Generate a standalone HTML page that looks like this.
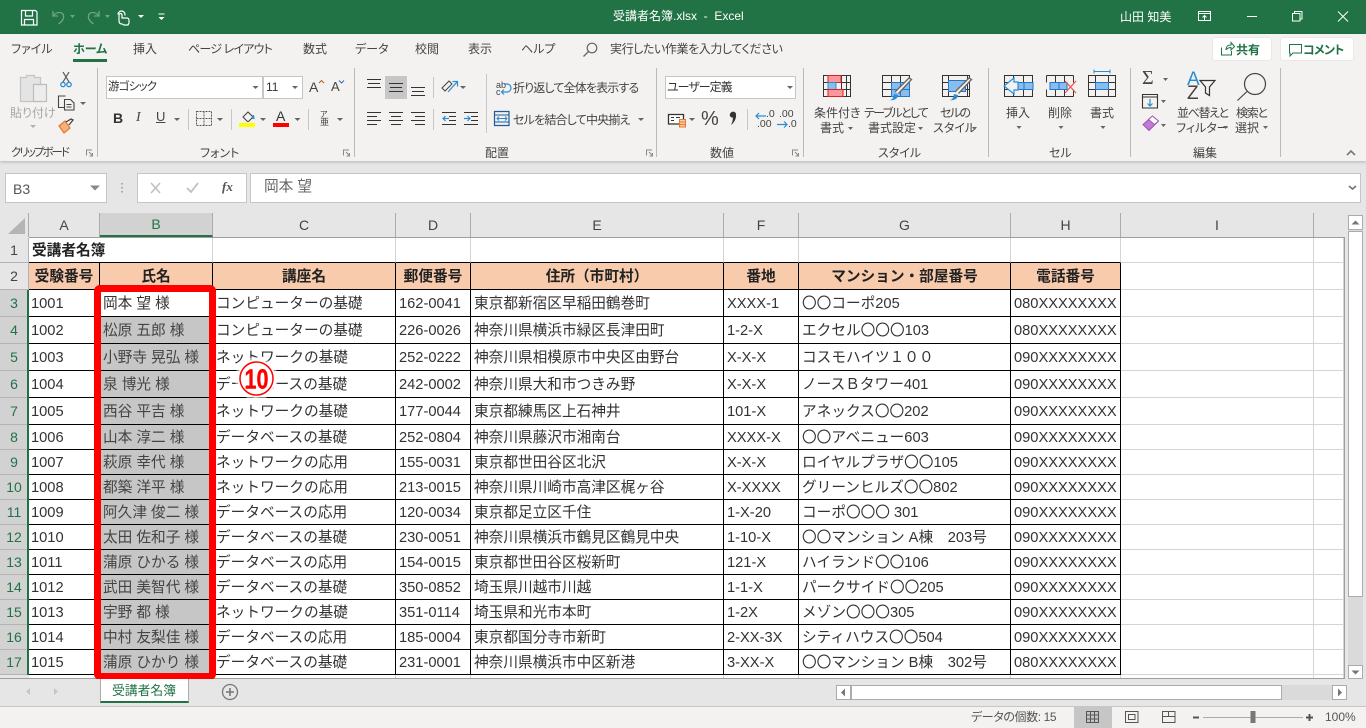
<!DOCTYPE html>
<html lang="ja">
<head>
<meta charset="utf-8">
<title>受講者名簿.xlsx - Excel</title>
<style>
html,body{margin:0;padding:0;width:1366px;height:728px;overflow:hidden;background:#e6e6e6;}
body{position:relative;font-family:"Liberation Sans","Noto Sans CJK JP",sans-serif;color:#000;}
.a{position:absolute;}
.t{position:absolute;white-space:nowrap;font-size:12px;line-height:18px;height:18px;color:#444;font-feature-settings:"palt";}
.c{transform:translateX(-50%);text-align:center;}
.g{color:#a6a6a6;}
.w{color:#fff;}
#sheet{position:absolute;left:29px;top:238px;width:1315px;height:440px;overflow:hidden;background:#fff;}
table{border-spacing:0;table-layout:fixed;border-collapse:separate;}
#sheet td{box-sizing:border-box;padding:2px 0 0 2px;font-size:14.67px;line-height:18px;white-space:nowrap;overflow:hidden;border-right:1px solid #d4d4d4;border-bottom:1px solid #d4d4d4;vertical-align:middle;color:#333;}
#sheet tr.d td.k{border-right:1px solid #000;border-bottom:1px solid #000;}
#sheet td.h{background:#f8cbad;font-weight:bold;text-align:center;padding:2px 0 0 0;border-right:1px solid #000;border-bottom:1px solid #000;color:#222;}
#sheet td.n{padding-left:3px;}
#sheet td.s{background:#c6c6c6;padding-left:3px;color:#444;}
#sheet td.x{padding-left:3px;}
.ch{position:absolute;top:213px;height:24px;line-height:24px;text-align:center;font-size:14px;color:#444;background:#e6e6e6;box-sizing:border-box;border-right:1px solid #ababab;}
.rh{position:absolute;left:0;width:28px;text-align:center;font-size:14px;color:#444;background:#e6e6e6;box-sizing:border-box;border-bottom:1px solid #b4b4b4;}
.rs{background:#d2d2d2;color:#217346;}
.box{position:absolute;background:#fff;border:1px solid #c6c6c6;box-sizing:border-box;}
</style>
</head>
<body>

<!-- title bar -->
<div class="a" style="left:0;top:0;width:1366px;height:34px;background:#217346;"></div>
<!-- ribbon -->
<div class="a" style="left:0;top:34px;width:1366px;height:127px;background:#f3f2f1;box-shadow:0 1px 3px rgba(0,0,0,.22);"></div>

<span class="t w" style="left:613px;top:7px;font-feature-settings:normal;">受講者名簿.xlsx&nbsp;&nbsp;-&nbsp;&nbsp;Excel</span>
<span class="t w" style="left:1120px;top:8px;font-feature-settings:normal;">山田 知美</span>

<!-- tabs -->
<span class="t" style="left:11px;top:40px;">ファイル</span>
<span class="t" style="left:73px;top:40px;font-weight:bold;color:#217346;">ホーム</span>
<div class="a" style="left:73px;top:59px;width:34px;height:3px;background:#217346;"></div>
<span class="t" style="left:133px;top:40px;">挿入</span>
<span class="t" style="left:188px;top:40px;letter-spacing:-.8px;">ページ レイアウト</span>
<span class="t" style="left:303px;top:40px;">数式</span>
<span class="t" style="left:355px;top:40px;">データ</span>
<span class="t" style="left:415px;top:40px;">校閲</span>
<span class="t" style="left:468px;top:40px;">表示</span>
<span class="t" style="left:521px;top:40px;">ヘルプ</span>
<span class="t" style="left:610px;top:40px;letter-spacing:-.4px;">実行したい作業を入力してください</span>

<div class="a" style="left:1213px;top:38px;width:58px;height:22px;background:#fff;border-radius:2px;box-shadow:0 0 1px #bbb;"></div>
<span class="t" style="left:1236px;top:41px;font-weight:bold;color:#217346;">共有</span>
<div class="a" style="left:1281px;top:38px;width:72px;height:22px;background:#fff;border-radius:2px;box-shadow:0 0 1px #bbb;"></div>
<span class="t" style="left:1303px;top:41px;font-weight:bold;color:#217346;letter-spacing:-.7px;">コメント</span>

<!-- clipboard labels -->
<span class="t g" style="left:10px;top:104px;">貼り付け</span>
<span class="t" style="left:11px;top:144px;font-size:11.5px;letter-spacing:-2px;">クリップボード</span>
<span class="t" style="left:200px;top:144px;">フォント</span>
<span class="t" style="left:485px;top:144px;">配置</span>
<span class="t" style="left:710px;top:144px;">数値</span>
<span class="t" style="left:878px;top:144px;">スタイル</span>
<span class="t" style="left:1049px;top:144px;">セル</span>
<span class="t" style="left:1193px;top:144px;">編集</span>

<!-- font boxes -->
<div class="box" style="left:106px;top:76px;width:157px;height:23px;"></div>
<div class="box" style="left:263px;top:76px;width:40px;height:23px;"></div>
<span class="t" style="left:108px;top:78px;font-size:11.5px;color:#333;letter-spacing:-.8px;">游ゴシック</span>
<span class="t" style="left:266px;top:78px;color:#333;">11</span>
<span class="t" style="left:309px;top:78px;font-size:14px;">A</span>
<span class="t" style="left:331px;top:78px;font-size:13px;">A</span>
<span class="t" style="left:113px;top:109px;font-weight:bold;font-size:14px;color:#333;">B</span>
<span class="t" style="left:136px;top:109px;font-style:italic;font-family:'Liberation Serif',serif;font-size:14px;">I</span>
<span class="t" style="left:156px;top:108px;font-size:13px;text-decoration:underline;">U</span>
<span class="t" style="left:276px;top:107px;font-size:14px;color:#333;">A</span>
<span class="t" style="left:320px;top:106px;font-size:8px;">ア</span>
<span class="t" style="left:320px;top:113px;font-size:9px;">亜</span>

<!-- align labels -->
<span class="t" style="left:513px;top:79px;letter-spacing:-.85px;">折り返して全体を表示する</span>
<span class="t" style="left:513px;top:111px;letter-spacing:-.8px;">セルを結合して中央揃え</span>
<span class="t" style="left:496px;top:76px;font-size:9px;color:#444;">ab</span>
<span class="t" style="left:496px;top:83px;font-size:9px;color:#444;">c</span>

<!-- number -->
<div class="box" style="left:665px;top:76px;width:131px;height:23px;"></div>
<span class="t" style="left:667px;top:78px;color:#333;letter-spacing:-1px;">ユーザー定義</span>
<span class="t" style="left:701px;top:110px;font-size:20px;">%</span>
<span class="t" style="left:766px;top:105px;font-size:10.5px;">.0</span>
<span class="t" style="left:757px;top:115px;font-size:10.5px;">.00</span>
<span class="t" style="left:779px;top:105px;font-size:10.5px;">.00</span>
<span class="t" style="left:788px;top:115px;font-size:10.5px;">.0</span>

<!-- style labels -->
<span class="t" style="left:814px;top:104px;">条件付き</span>
<span class="t" style="left:820px;top:119px;">書式</span>
<span class="t" style="left:864px;top:104px;letter-spacing:-1.7px;">テーブルとして</span>
<span class="t" style="left:868px;top:119px;">書式設定</span>
<span class="t" style="left:940px;top:104px;letter-spacing:-1.6px;">セルの</span>
<span class="t" style="left:933px;top:119px;">スタイル</span>
<span class="t" style="left:1006px;top:104px;">挿入</span>
<span class="t" style="left:1048px;top:104px;">削除</span>
<span class="t" style="left:1090px;top:104px;">書式</span>
<span class="t" style="left:1177px;top:104px;letter-spacing:-1.4px;">並べ替えと</span>
<span class="t" style="left:1176px;top:119px;">フィルター</span>
<span class="t" style="left:1236px;top:104px;letter-spacing:-1.3px;">検索と</span>
<span class="t" style="left:1235px;top:119px;">選択</span>
<span class="t" style="left:1142px;top:69px;font-size:20px;font-family:'Liberation Serif',serif;">Σ</span>
<span class="t" style="left:1187px;top:71px;font-size:19px;color:#2a8dd4;">A</span>
<span class="t" style="left:1187px;top:85px;font-size:19px;">Z</span>

<!-- formula bar -->
<div class="box" style="left:5px;top:173px;width:102px;height:30px;"></div>
<span class="t" style="left:13px;top:180px;font-size:14px;color:#555;font-feature-settings:normal;">B3</span>
<div class="box" style="left:137px;top:173px;width:110px;height:30px;"></div>
<div class="box" style="left:250px;top:173px;width:1111px;height:30px;"></div>
<span class="t" style="left:264px;top:178px;font-size:14.67px;color:#666;font-feature-settings:normal;">岡本 望</span>
<span class="t" style="left:222px;top:178px;font-family:'Liberation Serif',serif;font-style:italic;font-weight:bold;font-size:13px;color:#555;">fx</span>

<!-- column headers -->
<div class="ch" style="left:0;width:29px;"></div>
<div class="ch" style="left:29px;width:71px;">A</div>
<div class="ch" style="left:100px;width:113px;background:#d2d2d2;color:#217346;border-bottom:2px solid #217346;line-height:22px;">B</div>
<div class="ch" style="left:213px;width:183px;">C</div>
<div class="ch" style="left:396px;width:75px;">D</div>
<div class="ch" style="left:471px;width:253px;">E</div>
<div class="ch" style="left:724px;width:75px;">F</div>
<div class="ch" style="left:799px;width:212px;">G</div>
<div class="ch" style="left:1011px;width:110px;">H</div>
<div class="ch" style="left:1121px;width:193px;">I</div>
<div class="ch" style="left:1314px;width:30px;border-right:none;"></div>
<div class="a" style="left:29px;top:237px;width:1316px;height:1px;background:#9e9e9e;"></div>
<div class="a" style="left:1344px;top:237px;width:1px;height:442px;background:#9e9e9e;"></div>
<div class="a" style="left:0;top:678px;width:1345px;height:1px;background:#9e9e9e;"></div>

<!-- row headers -->
<div class="rh" style="top:238px;height:25px;line-height:25px;">1</div>
<div class="rh" style="top:263px;height:27px;line-height:27px;">2</div>
<div class="rh rs" style="top:290px;height:27px;line-height:27px;">3</div>
<div class="rh rs" style="top:317px;height:27px;line-height:27px;">4</div>
<div class="rh rs" style="top:344px;height:27px;line-height:27px;">5</div>
<div class="rh rs" style="top:371px;height:27px;line-height:27px;">6</div>
<div class="rh rs" style="top:398px;height:27px;line-height:27px;">7</div>
<div class="rh rs" style="top:425px;height:25px;line-height:25px;">8</div>
<div class="rh rs" style="top:450px;height:25px;line-height:25px;">9</div>
<div class="rh rs" style="top:475px;height:25px;line-height:25px;">10</div>
<div class="rh rs" style="top:500px;height:25px;line-height:25px;">11</div>
<div class="rh rs" style="top:525px;height:25px;line-height:25px;">12</div>
<div class="rh rs" style="top:550px;height:25px;line-height:25px;">13</div>
<div class="rh rs" style="top:575px;height:25px;line-height:25px;">14</div>
<div class="rh rs" style="top:600px;height:25px;line-height:25px;">15</div>
<div class="rh rs" style="top:625px;height:25px;line-height:25px;">16</div>
<div class="rh rs" style="top:650px;height:25px;line-height:25px;">17</div>
<div class="rh" style="top:675px;height:3px;border:none;"></div>
<div class="a" style="left:28px;top:238px;width:1px;height:52px;background:#b4b4b4;"></div>
<div class="a" style="left:27px;top:290px;width:2px;height:385px;background:#217346;"></div>

<!-- sheet -->
<div id="sheet">
<table style="width:1315px;">
<colgroup><col style="width:71px"><col style="width:113px"><col style="width:183px"><col style="width:75px"><col style="width:253px"><col style="width:75px"><col style="width:212px"><col style="width:110px"><col style="width:193px"><col style="width:30px"></colgroup>
<tr style="height:25px"><td style="font-weight:bold;border-right:none;border-bottom:1px solid #000;overflow:visible;padding-left:3px;color:#222;">受講者名簿</td><td style="border-bottom:1px solid #000"></td><td style="border-bottom:1px solid #000"></td><td style="border-bottom:1px solid #000"></td><td style="border-bottom:1px solid #000"></td><td style="border-bottom:1px solid #000"></td><td style="border-bottom:1px solid #000"></td><td style="border-bottom:1px solid #000"></td><td></td><td></td></tr>
<tr style="height:27px"><td class="h">受験番号</td><td class="h">氏名</td><td class="h">講座名</td><td class="h">郵便番号</td><td class="h">住所（市町村）</td><td class="h">番地</td><td class="h">マンション・部屋番号</td><td class="h">電話番号</td><td></td><td></td></tr>
<tr class="d" style="height:27px"><td class="k">1001</td><td class="k n">岡本 望 様</td><td class="k x">コンピューターの基礎</td><td class="k x">162-0041</td><td class="k x">東京都新宿区早稲田鶴巻町</td><td class="k x">XXXX-1</td><td class="k x">〇〇コーポ205</td><td class="k x">080XXXXXXXX</td><td></td><td></td></tr>
<tr class="d" style="height:27px"><td class="k">1002</td><td class="k s">松原 五郎 様</td><td class="k x">コンピューターの基礎</td><td class="k x">226-0026</td><td class="k x">神奈川県横浜市緑区長津田町</td><td class="k x">1-2-X</td><td class="k x">エクセル〇〇〇103</td><td class="k x">080XXXXXXXX</td><td></td><td></td></tr>
<tr class="d" style="height:27px"><td class="k">1003</td><td class="k s">小野寺 晃弘 様</td><td class="k x">ネットワークの基礎</td><td class="k x">252-0222</td><td class="k x">神奈川県相模原市中央区由野台</td><td class="k x">X-X-X</td><td class="k x">コスモハイツ１００</td><td class="k x">090XXXXXXXX</td><td></td><td></td></tr>
<tr class="d" style="height:27px"><td class="k">1004</td><td class="k s">泉 博光 様</td><td class="k x">データベースの基礎</td><td class="k x">242-0002</td><td class="k x">神奈川県大和市つきみ野</td><td class="k x">X-X-X</td><td class="k x">ノースＢタワー401</td><td class="k x">090XXXXXXXX</td><td></td><td></td></tr>
<tr class="d" style="height:27px"><td class="k">1005</td><td class="k s">西谷 平吉 様</td><td class="k x">ネットワークの基礎</td><td class="k x">177-0044</td><td class="k x">東京都練馬区上石神井</td><td class="k x">101-X</td><td class="k x">アネックス〇〇202</td><td class="k x">090XXXXXXXX</td><td></td><td></td></tr>
<tr class="d" style="height:25px"><td class="k">1006</td><td class="k s">山本 淳二 様</td><td class="k x">データベースの基礎</td><td class="k x">252-0804</td><td class="k x">神奈川県藤沢市湘南台</td><td class="k x">XXXX-X</td><td class="k x">〇〇アベニュー603</td><td class="k x">090XXXXXXXX</td><td></td><td></td></tr>
<tr class="d" style="height:25px"><td class="k">1007</td><td class="k s">萩原 幸代 様</td><td class="k x">ネットワークの応用</td><td class="k x">155-0031</td><td class="k x">東京都世田谷区北沢</td><td class="k x">X-X-X</td><td class="k x">ロイヤルプラザ〇〇105</td><td class="k x">090XXXXXXXX</td><td></td><td></td></tr>
<tr class="d" style="height:25px"><td class="k">1008</td><td class="k s">都築 洋平 様</td><td class="k x">ネットワークの応用</td><td class="k x">213-0015</td><td class="k x">神奈川県川崎市高津区梶ヶ谷</td><td class="k x">X-XXXX</td><td class="k x">グリーンヒルズ〇〇802</td><td class="k x">090XXXXXXXX</td><td></td><td></td></tr>
<tr class="d" style="height:25px"><td class="k">1009</td><td class="k s">阿久津 俊二 様</td><td class="k x">データベースの応用</td><td class="k x">120-0034</td><td class="k x">東京都足立区千住</td><td class="k x">1-X-20</td><td class="k x">コーポ〇〇〇 301</td><td class="k x">090XXXXXXXX</td><td></td><td></td></tr>
<tr class="d" style="height:25px"><td class="k">1010</td><td class="k s">太田 佐和子 様</td><td class="k x">データベースの基礎</td><td class="k x">230-0051</td><td class="k x">神奈川県横浜市鶴見区鶴見中央</td><td class="k x">1-10-X</td><td class="k x">〇〇マンション A棟　203号</td><td class="k x">090XXXXXXXX</td><td></td><td></td></tr>
<tr class="d" style="height:25px"><td class="k">1011</td><td class="k s">蒲原 ひかる 様</td><td class="k x">データベースの応用</td><td class="k x">154-0015</td><td class="k x">東京都世田谷区桜新町</td><td class="k x">121-X</td><td class="k x">ハイランド〇〇106</td><td class="k x">090XXXXXXXX</td><td></td><td></td></tr>
<tr class="d" style="height:25px"><td class="k">1012</td><td class="k s">武田 美智代 様</td><td class="k x">データベースの基礎</td><td class="k x">350-0852</td><td class="k x">埼玉県川越市川越</td><td class="k x">1-1-X</td><td class="k x">パークサイド〇〇205</td><td class="k x">090XXXXXXXX</td><td></td><td></td></tr>
<tr class="d" style="height:25px"><td class="k">1013</td><td class="k s">宇野 都 様</td><td class="k x">ネットワークの基礎</td><td class="k x">351-0114</td><td class="k x">埼玉県和光市本町</td><td class="k x">1-2X</td><td class="k x">メゾン〇〇〇305</td><td class="k x">090XXXXXXXX</td><td></td><td></td></tr>
<tr class="d" style="height:25px"><td class="k">1014</td><td class="k s">中村 友梨佳 様</td><td class="k x">データベースの応用</td><td class="k x">185-0004</td><td class="k x">東京都国分寺市新町</td><td class="k x">2-XX-3X</td><td class="k x">シティハウス〇〇504</td><td class="k x">090XXXXXXXX</td><td></td><td></td></tr>
<tr class="d" style="height:25px"><td class="k">1015</td><td class="k s">蒲原 ひかり 様</td><td class="k x">データベースの基礎</td><td class="k x">231-0001</td><td class="k x">神奈川県横浜市中区新港</td><td class="k x">3-XX-X</td><td class="k x">〇〇マンション B棟　302号</td><td class="k x">080XXXXXXXX</td><td></td><td></td></tr>
<tr style="height:25px"><td></td><td></td><td></td><td></td><td></td><td></td><td></td><td></td><td></td><td></td></tr>
</table>
</div>

<!-- red selection box -->
<div class="a" style="left:94px;top:285px;width:122px;height:395px;box-sizing:border-box;border:7px solid #f00;border-radius:6px;"></div>

<!-- scrollbars bg -->
<div class="a" style="left:1348px;top:215px;width:15px;height:463px;background:#dadada;"></div>
<div class="a" style="left:1348px;top:215px;width:15px;height:15px;background:#fff;border:1px solid #ababab;box-sizing:border-box;"></div>
<div class="a" style="left:1348px;top:231px;width:15px;height:366px;background:#fff;border:1px solid #ababab;box-sizing:border-box;"></div>
<div class="a" style="left:1348px;top:665px;width:15px;height:14px;background:#fff;border:1px solid #ababab;box-sizing:border-box;"></div>

<!-- sheet tab band -->
<div class="a" style="left:0;top:679px;width:1366px;height:27px;background:#e6e6e6;"></div>
<div class="a" style="left:0;top:706px;width:1366px;height:22px;background:#f3f2f1;border-top:1px solid #c6c6c6;box-sizing:border-box;"></div>
<div class="a" style="left:100px;top:679px;width:89px;height:24px;background:#fff;border:1px solid #ababab;border-top:none;border-bottom:2px solid #217346;box-sizing:border-box;"></div>
<span class="t" style="left:112px;top:682px;color:#217346;font-size:12.8px;font-feature-settings:normal;">受講者名簿</span>

<!-- h scrollbar -->
<div class="a" style="left:836px;top:685px;width:511px;height:15px;background:#dadada;"></div>
<div class="a" style="left:836px;top:685px;width:15px;height:15px;background:#fff;border:1px solid #ababab;box-sizing:border-box;"></div>
<div class="a" style="left:851px;top:685px;width:431px;height:15px;background:#fff;border:1px solid #ababab;box-sizing:border-box;"></div>
<div class="a" style="left:1332px;top:685px;width:15px;height:15px;background:#fff;border:1px solid #ababab;box-sizing:border-box;"></div>

<!-- status -->
<span class="t" style="left:971px;top:708px;color:#555;letter-spacing:-.4px;">データの個数: 15</span>
<div class="a" style="left:1074px;top:707px;width:38px;height:21px;background:#c6c6c6;"></div>
<span class="t" style="left:1325px;top:708px;color:#555;font-feature-settings:normal;">100%</span>

<!-- icons -->
<svg class="a" style="left:0;top:0;pointer-events:none;" width="1366" height="728" viewBox="0 0 1366 728" fill="none">
 <!-- QAT -->
 <g stroke="#fff" stroke-width="1.2">
  <path d="M21.5 10.5h14l1.5 1.5v13h-15.500z"/><path d="M25.500 10.500v5.500h7v-5.500M24.500 25v-5.500h9v5.500"/>
  <path d="M122 24c-2 0-3-1-3-3v-6a1.500 1.500 0 0 1 3 0v3h5a2 2 0 0 1 2 2v3l-1 2h-4z"/><path d="M118 14.500a3.500 3.500 0 0 1 7 0v1"/>
 </g>
 <g stroke="#6ea588" stroke-width="1.300">
  <path d="M53 11v5h5M53.500 15.500c3-4 9-4 10 0 .8 3-1.500 6-5 8.500"/>
  <path d="M99 11v5h-5M98.500 15.500c-3-4-9-4-10 0-.8 3 1.500 6 5 8.500"/>
 </g>
 <path d="M70 15h5l-2.500 3zM105 15h5l-2.500 3z" fill="#6ea588"/>
 <path d="M138 15h6l-3 3zM158.500 17h6l-3 3z" fill="#fff"/><path d="M158.500 14h6" stroke="#fff"/>
 <!-- window -->
 <g stroke="#fff" stroke-width="1">
  <path d="M1198.500 11.500h12v9h-12zM1198.500 13.500h12M1204.500 20v-4M1202.500 17.500l2-2 2 2"/>
  <path d="M1247 16.500h10"/>
  <path d="M1292.500 13.500h7.500v7.500h-7.500zM1294.500 13.500v-2h7.500v7.500h-2"/>
  <path d="M1338 11.500l10 10M1348 11.500l-10 10"/>
 </g>
 <!-- ribbon separators -->
 <g stroke="#b9b9b9" stroke-width="1">
  <path d="M97.500 68v89M354.500 68v89M656.500 68v89M803.500 68v89M988.500 68v89M1130.500 68v89M1280.500 68v89"/>
 </g>
 <g stroke="#c6c6c6" stroke-width="1">
  <path d="M188.500 109v21M231.500 109v21M308.500 109v21M433.500 77v21M433.500 109v21M486.500 74v59M747.500 109v21"/>
 </g>
 <!-- search tab icon -->
 <circle cx="592" cy="48" r="4.800" stroke="#666" stroke-width="1.200"/><path d="M588.500 51.500l-5 5" stroke="#666" stroke-width="1.300"/>
 <!-- share / comment icons -->
 <path d="M1221.500 47.500v7.500h10v-4M1226 50c0-4 2-5 5-5v-2.500l3.500 4-3.500 3.500v-2.500c-2 0-3.500.5-5 2.500" stroke="#217346" stroke-width="1"/>
 <path d="M1289.500 44.500h12v8.500h-8.500l-3 3v-3h-.5z" stroke="#217346" stroke-width="1"/>
 <!-- paste -->
 <path d="M20.500 77.500h6v-2h8v2h6v24h-20z" fill="#e4e4e4" stroke="#c4c4c4" stroke-width="1.200"/>
 <path d="M33.500 84.500h13v17h-13z" fill="#ececec" stroke="#bcbcbc" stroke-width="1.200"/>
 <path d="M30 125h6l-3 3z" fill="#b0b0b0"/>
 <!-- scissors -->
 <path d="M63 72l6 10M69 72l-6 10" stroke="#555" stroke-width="1.200"/><circle cx="63" cy="84.500" r="2.200" stroke="#2a8dd4" stroke-width="1.300"/><circle cx="69" cy="84.500" r="2.200" stroke="#2a8dd4" stroke-width="1.300"/>
 <!-- copy -->
 <path d="M64 107.500h-5.500v-11.500h7M64.500 99.500h6l3.500 3.500v7h-9.500zM66.500 104.500h5M66.500 107h5" stroke="#444" stroke-width="1.100"/>
 <path d="M80 102h6l-3 3z" fill="#666"/>
 <!-- brush -->
 <path d="M59 126l6-5 5 7-6 5z" fill="#f4b183" stroke="#e8792a" stroke-width="1.200"/><path d="M66 122l5-3 2 1-4 5" stroke="#444" stroke-width="1.300"/>
 <!-- launchers -->
 <g stroke="#888" stroke-width="1"><path d="M86.500 155.500v-5.500h5.500M343.500 155.500v-5.500h5.500"/><path d="M89 152l3.500 3.500M92.500 153v3h-3"/>
 <path d="M646.500 155.500v-5.500h5.500M792.500 155.500v-5.500h5.500M649 152l3.500 3.500M652.500 153v3h-3M795 152l3.500 3.500M798.500 153v3h-3M346 152l3.500 3.500M349.500 153v3h-3"/></g>
 <path d="M1347 155l4-4 4 4" stroke="#777" stroke-width="1.600"/>
 <!-- font dropdown arrows -->
 <g fill="#666">
  <path d="M252.500 86h6l-3 3zM292 86h6l-3 3zM174 118h6l-3 3zM217 118h6l-3 3zM260 118h6l-3 3zM294.500 118h6l-3 3zM337 118h6l-3 3zM460 86h6l-3 3zM638 118h6l-3 3zM787 86h6l-3 3zM689 118h6l-3 3zM848 127h5l-2.500 3zM918 127h5l-2.500 3zM972 127h5l-2.500 3zM1016.500 126h5l-2.500 3zM1058.500 126h5l-2.500 3zM1100.500 126h5l-2.500 3zM1163 78h5l-2.500 3zM1161 100h5l-2.500 3zM1161 124h5l-2.500 3zM1223 126h5l-2.500 3zM1263 126h5l-2.500 3z"/>
 </g>
 <path d="M319 83l2.500-2.500 2.500 2.500" stroke="#c05a1a" stroke-width="1"/><path d="M339 80.500l2.500 2.500 2.500-2.500" stroke="#2a6fb0" stroke-width="1"/>
 <!-- borders icon -->
 <g stroke="#555" stroke-width="1" stroke-dasharray="2 1"><path d="M196.500 111.500h15v14h-15zM204 111.500v14M196.500 118.500h15"/></g>
 <!-- fill color -->
 <path d="M243 117l5-5 5 5-4.500 4.500h-1z" stroke="#444" stroke-width="1.100"/><path d="M252 116c1-2 2-1 2.500 1v2h-2z" fill="#2a8dd4"/>
 <rect x="239" y="123" width="16" height="4" fill="#ff0"/>
 <rect x="273" y="123" width="16" height="4" fill="#f00"/>
 <!-- alignment -->
 <rect x="385" y="76" width="22" height="23" fill="#c6c6c6"/>
 <g stroke="#333" stroke-width="1">
  <path d="M367 79.500h14M368 83.500h12M367 87.500h14"/>
  <path d="M389 83.500h14M390 87.500h12M389 91.500h14"/>
  <path d="M411 87.500h14M412 91.500h12M411 95.500h14"/>
  <path d="M367 112.500h14M367 116.500h10M367 120.500h14M367 124.500h10"/>
  <path d="M389 112.500h14M391 116.500h10M389 120.500h14M391 124.500h10"/>
  <path d="M411 112.500h14M415 116.500h10M411 120.500h14M415 124.500h10"/>
  <path d="M442 112.500h14M449 116.500h7M449 120.500h7M442 124.500h14"/>
  <path d="M464 112.500h14M471 116.500h7M471 120.500h7M464 124.500h14"/>
 </g>
 <path d="M449 118.500h-6M445.500 116l-2.500 2.500 2.500 2.500M464 118.500h6M467.500 116l2.500 2.500-2.500 2.500" stroke="#2a8dd4" stroke-width="1.200"/>
 <!-- orientation -->
 <path d="M442 88l7-7 3 3-7 7z" stroke="#444" stroke-width="1"/><path d="M448 92l9-10M452.500 81.500h5v5" stroke="#2a8dd4" stroke-width="1.200"/>
 <!-- wrap -->
 <path d="M504 84h3a2.500 2.500 0 0 1 0 8h-5M504 89.500l-2.500 2.500 2.500 2.500" stroke="#2a8dd4" stroke-width="1.200"/>
 <!-- merge -->
 <path d="M494.500 111.500h14.500v14h-14.500z" stroke="#1f5c99" stroke-width="1.200"/><path d="M494.500 115h14.500M494.500 122h14.500" stroke="#1f5c99"/><path d="M497 118.500h10M499 116.500l-2 2 2 2M505 116.500l2 2-2 2" stroke="#2a8dd4"/>
 <!-- currency -->
 <path d="M668.500 114.500h15v9.500h-15z" fill="#fff" stroke="#333" stroke-width="1.300"/><path d="M671 117.500h3M676 117.500h4M671 120.500h3" stroke="#333"/>
 <path d="M679.500 119.500h6v7.500h-6z" fill="#f8cbad" stroke="#e8792a"/><path d="M679.500 122h6M679.500 124.500h6" stroke="#e8792a"/>
 <!-- comma -->
 <path d="M731 112.500a3 3 0 0 1 5 1.500c.6 4-1.500 8.500-5 11 1.400-3 2-5 1.800-7.500-1.500.3-3-.9-3-2.500 0-1 .4-1.900 1.200-2.500z" fill="#333"/>
 <path d="M766 116h-10M759 113l-3 3 3 3M777 124.500h10M784 121.500l3 3-3 3" stroke="#2a8dd4" stroke-width="1.200"/>
 <!-- conditional format -->
 <g>
  <rect x="828" y="75.500" width="13" height="7" fill="#f8979d" stroke="#e02020"/>
  <rect x="828" y="82.500" width="8" height="7" fill="#8abced" stroke="#2a8dd4"/>
  <rect x="828" y="89.500" width="15" height="7" fill="#f8979d" stroke="#e02020"/>
  <path d="M823.500 75.500h27v21h-27zM823.500 82.500h27M823.500 89.500h27M828.500 75.500v21M841.500 75.500v21M846.500 75.500v21" stroke="#333"/>
  <rect x="828" y="75.500" width="13" height="7" fill="#f8979d" stroke="#e02020"/>
  <rect x="828" y="82.500" width="8" height="7" fill="#8abced" stroke="#2a8dd4"/>
  <rect x="828" y="89.500" width="15" height="7" fill="#f8979d" stroke="#e02020"/>
 </g>
 <!-- table format -->
 <g>
  <path d="M882.500 75.500h27v21h-27zM882.500 82.500h27M882.500 89.500h27M891.500 75.500v21M900.500 75.500v21" stroke="#333"/>
  <rect x="891.500" y="82.500" width="18" height="14" fill="#8abced" stroke="#1f78c8"/>
  <path d="M891.500 89.500h18M900.500 82.500v14" stroke="#1f78c8"/>
  <path d="M895 92l14-14 2.500 1.500-13 14" fill="#f3f2f1" stroke="#666" stroke-width="1.300"/><path d="M889 100c3 0 4-1 5-6l4 1c0 3-3 6-9 5z" fill="#2a8dd4"/>
 </g>
 <!-- cell style -->
 <g>
  <path d="M942.500 75.500h27v21h-27zM942.500 82.500h27M942.500 89.500h27M948.500 75.500v21M967.500 75.500v21" stroke="#333"/>
  <rect x="948.500" y="80.500" width="17" height="11" fill="#8abced" stroke="#1f78c8"/>
  <path d="M955 92l14-14 2.500 1.500-13 14" fill="#f3f2f1" stroke="#666" stroke-width="1.300"/><path d="M949 100c3 0 4-1 5-6l4 1c0 3-3 6-9 5z" fill="#2a8dd4"/>
 </g>
 <!-- insert -->
 <path d="M1004.500 75.500h28v21h-28zM1004.500 82.500h28M1004.500 89.500h28M1013.500 75.500v21M1023.500 75.500v21" stroke="#333"/>
 <rect x="1015" y="82.500" width="18" height="7" fill="#8abced" stroke="#1f78c8"/><path d="M1024 82.500v7" stroke="#1f78c8"/>
 <path d="M1014 78l-10 8 10 8v-4h4v-8h-4z" fill="#f3f2f1" stroke="#2a8dd4" stroke-width="1.200"/>
 <!-- delete -->
 <path d="M1046.500 75.500h27M1046.500 96.500h27M1046.500 75.500v7M1046.500 89.500v7M1055.500 75.500v7M1064.500 75.500v7M1055.500 89.500v7M1064.500 89.500v7M1073.500 75.500v7M1073.500 89.500v7" stroke="#333"/>
 <rect x="1050" y="82.500" width="17" height="7" fill="#8abced" stroke="#1f78c8"/><path d="M1059 82.500v7" stroke="#1f78c8"/>
 <path d="M1065 81l11 12M1076 81l-11 12" stroke="#f0504a" stroke-width="1.200"/>
 <!-- format -->
 <path d="M1088.500 75.500h27v21h-27zM1088.500 82.500h27M1088.500 89.500h27M1095.500 75.500v21M1108.500 75.500v21" stroke="#333"/>
 <rect x="1095.500" y="82.500" width="13" height="7" fill="#8abced" stroke="#1f78c8"/>
 <path d="M1094 71.500h16M1094 69.500v4M1110 69.500v4" stroke="#2a8dd4"/>
 <!-- fill down -->
 <path d="M1142.500 94.500h15v13.500h-15zM1142.500 97h15" stroke="#333" stroke-width="1.100"/><path d="M1150 99v7M1147.500 103.500l2.500 2.500 2.500-2.500" stroke="#2a8dd4" stroke-width="1.200"/>
 <!-- eraser -->
 <path d="M1143 124.500l9-8 6 5-9 9z" fill="#c27ad4" stroke="#a050b8"/><path d="M1148.500 119.500l4-3.500 6 5-4 3.500z" fill="#fff" stroke="#a050b8"/>
 <!-- sort filter -->
 <path d="M1200 80.500h15l-5.500 6.500v8.500l-4-2.500v-6z" stroke="#333" stroke-width="1.200"/>
 <!-- find -->
 <circle cx="1255" cy="84" r="10.500" stroke="#444" stroke-width="1.200"/><path d="M1247 91.500l-9.500 9" stroke="#444" stroke-width="1.200"/>
 <!-- formula bar glyphs -->
 <path d="M90 185.500h10l-5 5z" fill="#888"/>
 <path d="M122 183v1.500M122 187v1.500M122 191v1.500" stroke="#aaa" stroke-width="2"/>
 <path d="M151 183l9 10M160 183l-9 10" stroke="#c0c0c0" stroke-width="1.600"/>
 <path d="M187 188l4 4 7-9" stroke="#c0c0c0" stroke-width="1.800"/>
 <path d="M1349 186l3.500 3 3.500-3" stroke="#777" stroke-width="1.800"/>
 <!-- corner -->
 <path d="M25 218v16h-17z" fill="#b4b4b4"/>
 <!-- scroll arrows -->
 <path d="M1351.500 224.500h8l-4-4zM1351.500 670.500h8l-4 4zM841 692.500l4-4v8zM1342 692.500l-4-4v8z" fill="#777"/>
 <!-- sheet nav -->
 <path d="M26 691.500l4-3.500v7zM58 691.500l-4-3.500v7z" fill="#c6c6c6"/>
 <!-- add sheet -->
 <circle cx="230" cy="692" r="7.500" stroke="#777" stroke-width="1.300"/><path d="M226 692h8M230 688v8" stroke="#777" stroke-width="1.600"/>
 <!-- status icons -->
 <g stroke="#555" stroke-width="1">
  <path d="M1086.500 711.500h12v11h-12zM1086.500 715h12M1086.500 719h12M1090.500 711.500v11M1094.500 711.500v11"/>
  <path d="M1125.500 711.500h12.500v11h-12.500zM1128.500 714.500h6.500v5h-6.500z"/>
  <path d="M1162.500 722.500v-11h12.500v11zM1168.500 711.500v5h-6M1168.500 716.500h6.500"/>
 </g>
 <path d="M1193 717.500h6" stroke="#555" stroke-width="2"/>
 <path d="M1203 717.500h100" stroke="#aaa"/>
 <rect x="1250.500" y="711" width="5" height="12" fill="#777"/>
 <path d="M1306 717.500h7M1309.500 714v7" stroke="#555" stroke-width="2"/>
 <!-- badge -->
 <circle cx="256.500" cy="378.500" r="21.500" fill="#fff" fill-opacity=".5"/>
 <circle cx="256.500" cy="378.500" r="19" fill="#fff"/>
 <circle cx="256.500" cy="378.500" r="16.500" stroke="#f00" stroke-width="1.500"/>
 <text x="256.500" y="388.500" text-anchor="middle" font-family="'Liberation Sans',sans-serif" font-weight="bold" font-size="28" textLength="24" lengthAdjust="spacingAndGlyphs" fill="#f00" stroke="#f00" stroke-width=".4">10</text>
</svg>
</body>
</html>
